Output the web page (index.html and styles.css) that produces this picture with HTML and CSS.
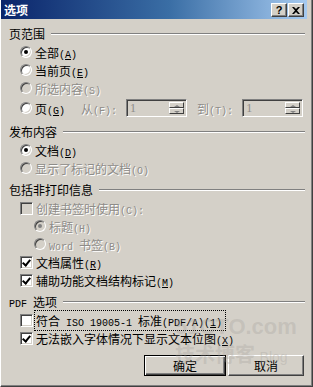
FILE: index.html
```html
<!DOCTYPE html>
<html lang="zh-CN">
<head>
    <meta charset="UTF-8">
    <title>选项</title>
    <link rel="stylesheet" href="styles.css">
</head>
<body>
    <div class="window">
        <!-- Title bar -->
        <div class="titlebar">
            <span class="title">选项</span>
            <div class="tb-buttons">
                <span class="tb-btn help">?</span>
                <span class="tb-btn">
                    <svg width="8" height="7" viewBox="0 0 8 7"><path d="M0 0h2l2 2 2-2h2L5 3.5 8 7H6L4 5 2 7H0l3-3.5z" fill="#000"/></svg>
                </span>
            </div>
        </div>

        <div class="content">
            <!-- 页范围 -->
            <div class="group">
                <div class="group-title"><span>页范围</span><i class="rule"></i></div>
                <div class="row"><span class="radio checked"></span><span class="text">全部<span class="en">(<u>A</u>)</span></span></div>
                <div class="row"><span class="radio"></span><span class="text">当前页<span class="en">(<u>E</u>)</span></span></div>
                <div class="row disabled"><span class="radio"></span><span class="text">所选内容<span class="en">(S)</span></span></div>
                <div class="row page-row">
                    <span class="radio"></span><span class="text">页<span class="en">(<u>G</u>)</span></span>
                    <span class="text dim from">从<span class="en">(F):</span></span>
                    <span class="spin"><span class="spin-val">1</span><span class="spin-btns"><i class="up"></i><i class="down"></i></span></span>
                    <span class="text dim to">到<span class="en">(T):</span></span>
                    <span class="spin"><span class="spin-val">1</span><span class="spin-btns"><i class="up"></i><i class="down"></i></span></span>
                </div>
            </div>

            <!-- 发布内容 -->
            <div class="group">
                <div class="group-title"><span>发布内容</span><i class="rule"></i></div>
                <div class="row"><span class="radio checked"></span><span class="text">文档<span class="en">(<u>D</u>)</span></span></div>
                <div class="row disabled"><span class="radio"></span><span class="text">显示了标记的文档<span class="en">(O)</span></span></div>
            </div>

            <!-- 包括非打印信息 -->
            <div class="group">
                <div class="group-title"><span>包括非打印信息</span><i class="rule"></i></div>
                <div class="row disabled"><span class="check"></span><span class="text">创建书签时使用<span class="en">(C):</span></span></div>
                <div class="row sub disabled"><span class="radio checked"></span><span class="text">标题<span class="en">(H)</span></span></div>
                <div class="row sub disabled"><span class="radio"></span><span class="text"><span class="en">Word </span>书签<span class="en">(B)</span></span></div>
                <div class="row"><span class="check checked"></span><span class="text">文档属性<span class="en">(<u>R</u>)</span></span></div>
                <div class="row"><span class="check checked"></span><span class="text">辅助功能文档结构标记<span class="en">(<u>M</u>)</span></span></div>
            </div>

            <!-- PDF 选项 -->
            <div class="group">
                <div class="group-title"><span><span class="en">PDF </span>选项</span><i class="rule"></i></div>
                <div class="row"><span class="check"></span><span class="text focus">符合<span class="en"> ISO 19005-1 </span>标准<span class="en">(PDF/A)(<u>1</u>)</span></span></div>
                <div class="row"><span class="check checked"></span><span class="text">无法嵌入字体情况下显示文本位图<span class="en">(<u>X</u>)</span></span></div>
            </div>

            <div class="buttons">
                <span class="btn default">确定</span>
                <span class="btn">取消</span>
            </div>
        </div>

        <!-- watermark of the source site -->
        <div class="watermark">
            <span class="wm-site">51CTO.com</span>
            <span class="wm-blog">技术博客 <span class="en">Blog</span></span>
        </div>
    </div>
</body>
</html>
```

FILE: styles.css
```css
/* Classic Windows 2000 dialog */
body {
    margin: 0;
    background: #d4d0c8;
    font-family: "Noto Sans CJK SC", sans-serif;
    font-size: 12px;
    color: #000;
}
.window {
    position: relative;
    width: 313px;
    height: 387px;
    box-sizing: border-box;
    background: #d4d0c8;
    border-left: 1px solid #fff;
    border-right: 1px solid #404040;
    border-bottom: 1px solid #404040;
    box-shadow: inset -1px -1px 0 #808080, inset 1px 0 0 #d4d0c8;
    padding: 0 5px 4px 1px;
    overflow: hidden;
}
.titlebar {
    height: 19px;
    display: flex;
    align-items: center;
    justify-content: space-between;
    background: linear-gradient(to right, #0a246a 0%, #3a6ea5 55%, #a6caf0 100%);
    padding: 0 3px 0 3px;
    margin-left: -1px;
}
.title {
    color: #fff;
    font-weight: bold;
    line-height: 19px;
}
.tb-buttons {
    display: flex;
    margin-top: 1px;
}
.tb-btn {
    width: 16px;
    height: 14px;
    box-sizing: border-box;
    display: flex;
    align-items: center;
    justify-content: center;
    background: #d4d0c8;
    border: 1px solid;
    border-color: #fff #404040 #404040 #fff;
    box-shadow: inset -1px -1px 0 #808080;
    font-family: "Liberation Sans", sans-serif;
    font-weight: bold;
    font-size: 11px;
    line-height: 1;
}
.tb-btn + .tb-btn {
    margin-left: 1px;
}
.content {
    padding: 4px 2px 0 7px;
}
.en {
    font-family: "Liberation Mono", monospace;
    font-size: 10px;
}
.group {
    margin-bottom: 2px;
}
.group-title {
    display: flex;
    align-items: center;
    height: 20px;
    gap: 6px;
}
.group-title .rule {
    flex: 1;
    height: 1px;
    background: #808080;
    border-bottom: 1px solid #fff;
    margin-top: 1px;
}
.row {
    display: flex;
    align-items: center;
    height: 18px;
    padding-left: 11px;
}
.row.sub {
    padding-left: 25px;
}
.row .text {
    margin-left: 3px;
    white-space: nowrap;
}
.disabled .text,
.text.dim {
    color: #8e8c88;
    text-shadow: 1px 1px 0 #fff;
}
.radio {
    position: relative;
    width: 12px;
    height: 12px;
    box-sizing: border-box;
    border-radius: 50%;
    background: #fff;
    border: 1px solid;
    border-color: #808080 #fff #fff #808080;
    box-shadow: inset 1px 1px 0 #404040, inset -1px -1px 0 #d4d0c8;
    flex: none;
}
.radio.checked::after {
    content: "";
    position: absolute;
    left: 3px;
    top: 3px;
    width: 4px;
    height: 4px;
    border-radius: 50%;
    background: #000;
}
.disabled .radio {
    background: #d4d0c8;
}
.disabled .radio.checked::after {
    background: #808080;
}
.check {
    position: relative;
    width: 13px;
    height: 13px;
    box-sizing: border-box;
    background: #fff;
    border: 1px solid;
    border-color: #808080 #fff #fff #808080;
    box-shadow: inset 1px 1px 0 #404040, inset -1px -1px 0 #d4d0c8;
    flex: none;
}
.check.checked::after {
    content: "";
    position: absolute;
    left: 3px;
    top: 1px;
    width: 3px;
    height: 6px;
    border: solid #000;
    border-width: 0 2px 2px 0;
    transform: rotate(40deg);
}
.disabled .check {
    background: #d4d0c8;
}
.page-row {
    height: 22px;
    margin-bottom: 2px;
}
.page-row .from {
    margin-left: 16px;
}
.page-row .to {
    margin-left: 10px;
}
.spin {
    display: flex;
    width: 61px;
    height: 18px;
    box-sizing: border-box;
    margin-left: 9px;
    background: #d4d0c8;
    border: 1px solid;
    border-color: #808080 #fff #fff #808080;
    box-shadow: inset 1px 1px 0 #404040, inset -1px -1px 0 #d4d0c8;
    padding: 2px 2px 2px 3px;
}
.spin-val {
    flex: 1;
    color: #8e8c88;
    line-height: 13px;
    font-family: "Liberation Serif", serif;
    font-size: 12px;
}
.spin-btns {
    display: flex;
    flex-direction: column;
    width: 15px;
}
.spin-btns i {
    position: relative;
    flex: 1;
    background: #d4d0c8;
    border: 1px solid;
    border-color: #fff #404040 #404040 #fff;
}
.spin-btns i::after {
    content: "";
    position: absolute;
    left: 4px;
    top: 1px;
    border: 2px solid transparent;
    border-left-width: 3px;
    border-right-width: 3px;
}
.spin-btns .up::after {
    top: 0;
    border-bottom-color: #808080;
}
.spin-btns .down::after {
    top: 2px;
    border-top-color: #808080;
}
.focus {
    outline: 1px dotted #000;
    outline-offset: 1px;
    padding-right: 2px;
}
.buttons {
    display: flex;
    justify-content: flex-end;
    gap: 2px;
    margin-top: 8px;
    padding-right: 1px;
}
.btn {
    width: 76px;
    height: 21px;
    box-sizing: border-box;
    display: flex;
    align-items: center;
    justify-content: center;
    border: 1px solid;
    border-color: #fff #404040 #404040 #fff;
    box-shadow: inset -1px -1px 0 #808080;
}
.btn.default {
    width: 82px;
    outline: 1px solid #000;
    outline-offset: -1px;
    border-color: #000;
    box-shadow: inset 1px 1px 0 #fff, inset -1px -1px 0 #404040, inset -2px -2px 0 #808080;
}
.watermark {
    position: absolute;
    left: 174px;
    top: 316px;
    pointer-events: none;
    color: rgba(160, 158, 152, 0.3);
    line-height: 1;
}
.wm-site {
    display: block;
    font-family: "Liberation Sans", sans-serif;
    font-weight: bold;
    font-size: 22px;
}
.wm-blog {
    display: block;
    margin-top: 6px;
    font-size: 20px;
    font-weight: bold;
}
.wm-blog .en {
    font-family: "Liberation Sans", sans-serif;
    font-size: 14px;
    font-weight: normal;
}
```
